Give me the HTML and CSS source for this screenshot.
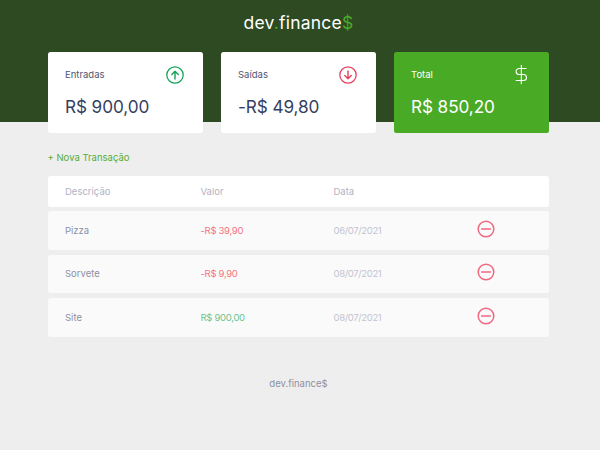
FILE: index.html
```html
<!DOCTYPE html>
<html lang="pt-BR">
<head>
<meta charset="utf-8">
<title>dev.finance$</title>
<link rel="stylesheet" href="styles.css">
</head>
<body>
<header class="header">
  <h1 class="logo">dev<span class="accent">.</span>finance<span class="accent">$</span></h1>
</header>
<main class="main">
  <section class="cards">
    <div class="card">
      <div class="card-top"><span>Entradas</span>
        <svg class="card-icon" viewBox="0 0 18 18" fill="none" stroke="#12a454" stroke-width="1.25" stroke-linecap="round" stroke-linejoin="round"><circle cx="9" cy="9" r="8.2"/><path d="M9 13V5.2M5.8 8.4 9 5.2l3.2 3.2" stroke-width="1.4"/></svg>
      </div>
      <p class="amount">R$ 900,00</p>
    </div>
    <div class="card">
      <div class="card-top"><span>Saídas</span>
        <svg class="card-icon" viewBox="0 0 18 18" fill="none" stroke="#e83f5b" stroke-width="1.25" stroke-linecap="round" stroke-linejoin="round"><circle cx="9" cy="9" r="8.2"/><path d="M9 5v7.8M5.8 9.6 9 12.8l3.2-3.2" stroke-width="1.4"/></svg>
      </div>
      <p class="amount">-R$ 49,80</p>
    </div>
    <div class="card card-total">
      <div class="card-top"><span>Total</span>
        <svg class="card-dollar" viewBox="0 0 14 22" fill="none" stroke="#fff" stroke-width="1.2" stroke-linecap="round" stroke-linejoin="round"><path d="M6.8 1v20M12 4.6H4.4a3.2 3.2 0 0 0 0 6.4h4.8a3.2 3.2 0 0 1 0 6.4H1.2"/></svg>
      </div>
      <p class="amount">R$ 850,20</p>
    </div>
  </section>
  <a class="new-link" href="#">+ Nova Transação</a>
  <section class="table">
    <div class="row row-head"><span>Descrição</span><span>Valor</span><span>Data</span><span></span></div>
    <div class="row"><span class="desc">Pizza</span><span class="expense">-R$ 39,90</span><span class="date">06/07/2021</span><svg class="remove" viewBox="0 0 18 18"><circle cx="9" cy="9" r="7.8"/><path d="M4.6 9h8.8"/></svg></div>
    <div class="row"><span class="desc">Sorvete</span><span class="expense">-R$ 9,90</span><span class="date">08/07/2021</span><svg class="remove" viewBox="0 0 18 18"><circle cx="9" cy="9" r="7.8"/><path d="M4.6 9h8.8"/></svg></div>
    <div class="row"><span class="desc">Site</span><span class="income">R$ 900,00</span><span class="date">08/07/2021</span><svg class="remove" viewBox="0 0 18 18"><circle cx="9" cy="9" r="7.8"/><path d="M4.6 9h8.8"/></svg></div>
  </section>
</main>
<footer class="footer">dev.finance$</footer>
</body>
</html>
```

FILE: styles.css
```css
* { box-sizing: border-box; margin: 0; padding: 0; }
html, body { height: 100%; }
body {
  background: #eeeeee;
  font-family: "Inter", "Noto Sans", sans-serif;
  color: #969cb3;
  overflow: hidden;
}
.header {
  background: #2d4a22;
  height: 122px;
  padding: 11px 3px 0 0;
  text-align: center;
}
.logo {
  font-size: 17.5px;
  line-height: 24px;
  font-weight: 400;
  color: #fff;
  letter-spacing: 0.2px;
}
.accent { color: #49aa26; }
.main {
  width: 501.5px;
  margin: -70px 0 0 47.5px;
}
.cards {
  display: grid;
  grid-template-columns: repeat(3, 155.5px);
  gap: 17.5px;
}
.card {
  background: #fff;
  border-radius: 2.5px;
  height: 81px;
  padding: 13px 17.5px 0;
  color: #363f5f;
}
.card-top {
  display: flex;
  justify-content: space-between;
  align-items: center;
  height: 19px;
  font-size: 9.5px;
  color: #4f5673;
}
.card-icon { width: 18px; height: 18px; margin-right: 1.5px; }
.card-dollar { width: 13px; height: 21px; margin-right: 4px; }
.amount {
  margin-top: 10px;
  font-size: 17.2px;
  line-height: 26px;
  letter-spacing: -0.1px;
}
.card-total { background: #49aa26; color: #fff; }
.card-total .card-top { color: #fff; }
.new-link {
  display: block;
  margin-top: 18px;
  font-size: 9.5px;
  line-height: 14px;
  color: #58ad36;
  text-decoration: none;
}
.table {
  margin-top: 11px;
  display: flex;
  flex-direction: column;
  gap: 4.4px;
}
.row {
  display: grid;
  grid-template-columns: 135.5px 133px 143px 1fr;
  align-items: center;
  height: 38.8px;
  padding-left: 17.5px;
  background: #fafafa;
  border-radius: 2.5px;
  font-size: 9.5px;
  color: #969cb3;
}
.row-head {
  height: 31px;
  background: #fff;
  color: #b0b4c6;
}
.desc { color: #8e90a2; }
.expense { color: #f5737f; letter-spacing: -0.3px; }
.income { color: #6cc48f; letter-spacing: -0.3px; }
.date { color: #c2c4d2; letter-spacing: -0.35px; }
.remove {
  width: 18px;
  height: 18px;
  margin-top: -3px;
  fill: none;
  stroke: #ef6880;
  stroke-width: 1.5;
  stroke-linecap: round;
}
.footer {
  margin-top: 40px;
  padding-right: 3px;
  text-align: center;
  font-size: 9.5px;
  line-height: 14px;
  color: #8e90a2;
}
```
